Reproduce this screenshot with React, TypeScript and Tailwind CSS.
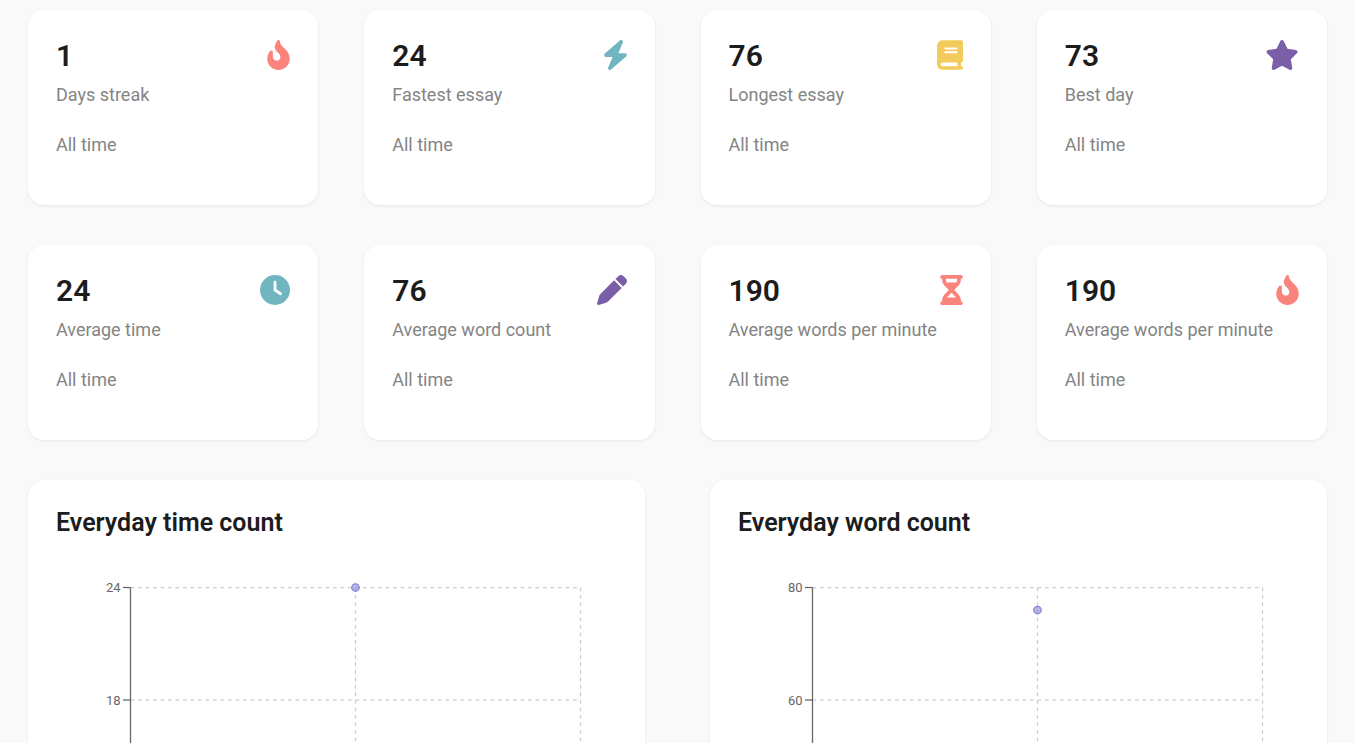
import type { ReactNode } from "react";
import { FaBolt, FaBook, FaStar, FaClock, FaPen, FaHourglassHalf } from "react-icons/fa6";

function Flame() {
  return (
    <svg viewBox="0 0 384 512" className="h-[30px] w-[23px] text-[#fa837c]" fill="currentColor" aria-hidden="true">
      <path d="M216 23.86c0-23.8-30.65-32.77-44.15-13.04C48 191.85 224 200 224 288c0 35.63-29.11 64.46-64.85 63.99-35.17-.45-63.15-29.77-63.15-64.94v-85.51c0-21.7-26.47-32.23-41.43-16.5C27.8 213.16 0 261.33 0 320c0 105.87 86.13 192 192 192s192-86.13 192-192c0-170.29-168-193-168-296.14z" />
    </svg>
  );
}

type Stat = { value: string; label: string; icon: ReactNode };

const stats: Stat[] = [
  { value: "1", label: "Days streak", icon: <Flame /> },
  {
    value: "24",
    label: "Fastest essay",
    icon: <FaBolt viewBox="32 0 384 512" className="h-[30px] w-[23px] text-[#70b5c0]" />,
  },
  { value: "76", label: "Longest essay", icon: <FaBook className="h-[30px] w-[26px] text-[#f3cb5c]" /> },
  { value: "73", label: "Best day", icon: <FaStar className="h-[30px] w-[34px] text-[#7a5ea8]" /> },
  { value: "24", label: "Average time", icon: <FaClock className="h-[30px] w-[30px] text-[#70b5c0]" /> },
  { value: "76", label: "Average word count", icon: <FaPen className="h-[30px] w-[30px] text-[#7a5ea8]" /> },
  {
    value: "190",
    label: "Average words per minute",
    icon: <FaHourglassHalf className="h-[30px] w-[23px] text-[#fa837c]" />,
  },
  { value: "190", label: "Average words per minute", icon: <Flame /> },
];

const cardClass = "rounded-2xl bg-white px-7 pt-[30px] shadow-[0_1px_3px_rgba(0,0,0,0.08)]";

function StatCard({ value, label, icon }: Stat) {
  return (
    <section className={`${cardClass} pb-12`}>
      <div className="flex items-start justify-between">
        <h2 className="text-[30px] leading-8 font-semibold text-[#1c1c1c]">{value}</h2>
        {icon}
      </div>
      <p className="mt-[11px] text-lg leading-6 text-[#848484]">{label}</p>
      <p className="mt-[26px] text-lg leading-6 text-[#848484]">All time</p>
    </section>
  );
}

type ChartProps = { title: string; max: number; ticks: number[]; value: number };

const LEFT = 74.5;
const TOP = 25.5;
const SIZE = 450;

function ChartCard({ title, max, ticks, value }: ChartProps) {
  const y = (v: number) => TOP + SIZE * (1 - v / max);
  return (
    <section className={`${cardClass} pb-7`}>
      <h2 className="text-[25px] leading-[26px] font-semibold text-[#1c1c1c]">{title}</h2>
      <svg width="540" height="500" className="mt-[26px] block max-w-full" role="img" aria-label={title}>
        <g stroke="#ccc" strokeWidth="1.25" strokeDasharray="3.75 3.75">
          {ticks.map((t) => (
            <line key={t} x1={LEFT} y1={y(t)} x2={LEFT + SIZE} y2={y(t)} />
          ))}
          {[0, 0.5, 1].map((f) => (
            <line key={f} x1={LEFT + SIZE * f} y1={TOP} x2={LEFT + SIZE * f} y2={TOP + SIZE} />
          ))}
        </g>
        <g stroke="#666" strokeWidth="1.25">
          <line x1={LEFT} y1={TOP} x2={LEFT} y2={TOP + SIZE} />
          {ticks.map((t) => (
            <line key={t} x1={LEFT - 7.5} y1={y(t)} x2={LEFT} y2={y(t)} />
          ))}
        </g>
        <g className="text-[13px]" fill="#666" textAnchor="end">
          {ticks.map((t) => (
            <text key={t} x={LEFT - 10} y={y(t) + 4.5}>
              {t}
            </text>
          ))}
        </g>
        <circle
          cx={LEFT + SIZE / 2}
          cy={y(value)}
          r="3.75"
          fill="#8884d8"
          fillOpacity="0.6"
          stroke="#8884d8"
          strokeWidth="1.25"
        />
      </svg>
    </section>
  );
}

export default function App() {
  return (
    <main className="h-screen overflow-hidden bg-[#f9f9f9] px-7 pt-[10px] font-['Roboto',sans-serif]">
      <div className="grid grid-cols-4 gap-x-[46px] gap-y-10">
        {stats.map((s, i) => (
          <StatCard key={i} {...s} />
        ))}
      </div>
      <div className="mt-10 grid grid-cols-2 gap-[65px]">
        <ChartCard title="Everyday time count" max={24} ticks={[24, 18]} value={24} />
        <ChartCard title="Everyday word count" max={80} ticks={[80, 60]} value={76} />
      </div>
    </main>
  );
}
